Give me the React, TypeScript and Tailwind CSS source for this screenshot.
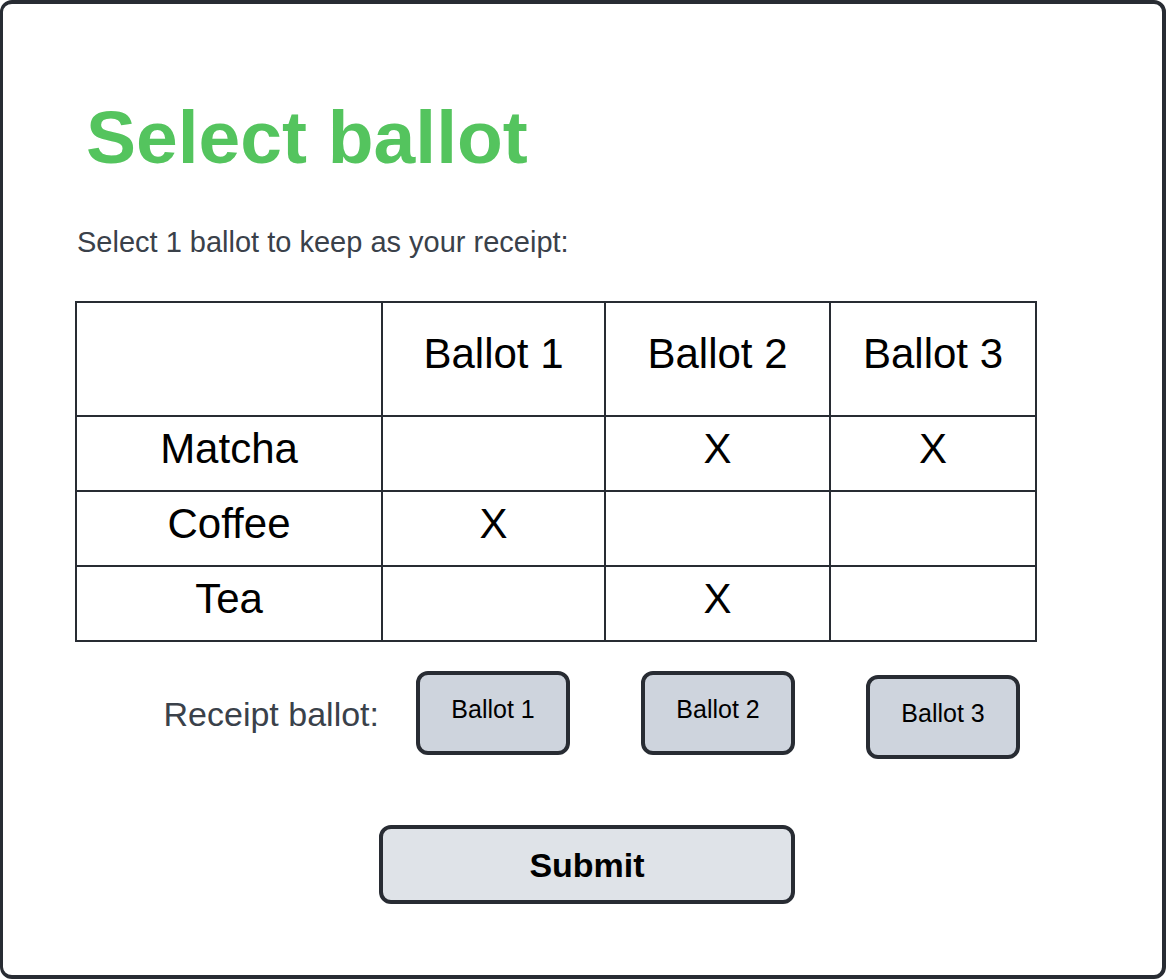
import React from "react";

const ballots = ["Ballot 1", "Ballot 2", "Ballot 3"];

const rows = [
  { name: "Matcha", marks: [false, true, true] },
  { name: "Coffee", marks: [true, false, false] },
  { name: "Tea", marks: [false, true, false] },
];

export default function App() {
  return (
    <main className="min-h-screen rounded-xl border-4 border-l-3 border-[#282c33] bg-white px-[72px] pt-[93px] pb-16 font-['Liberation_Sans',Arial,sans-serif] text-black">
      <h1 className="pl-[11px] text-[75px] leading-[80px] font-bold text-[#54c45e]">Select ballot</h1>
      <p className="mt-[47px] pl-[2px] text-[29px] leading-9 text-[#3a414a]">Select 1 ballot to keep as your receipt:</p>
      <table className="mt-[41px] w-[961px] max-w-full table-fixed border-collapse text-center text-[42px] leading-[50px]">
        <colgroup>
          <col className="w-[306px]" />
          <col className="w-[223px]" />
          <col className="w-[225px]" />
          <col className="w-[206px]" />
        </colgroup>
        <thead>
          <tr className="h-[114px]">
            <td className="border-2 border-[#282c33]" />
            {ballots.map((b) => (
              <th key={b} scope="col" className="border-2 border-[#282c33] pb-[10px] font-normal">{b}</th>
            ))}
          </tr>
        </thead>
        <tbody>
          {rows.map((row) => (
            <tr key={row.name} className="h-[75px]">
              <th scope="row" className="border-2 border-[#282c33] pb-[10px] font-normal">{row.name}</th>
              {row.marks.map((m, i) => (
                <td key={i} className="border-2 border-[#282c33] pb-[10px]">{m ? "X" : ""}</td>
              ))}
            </tr>
          ))}
        </tbody>
      </table>
      <div className="mt-[29px] flex items-start" role="group" aria-labelledby="receipt-label">
        <span id="receipt-label" className="w-[304px] pt-[23px] text-right text-[34px] leading-10 text-[#3a414a]">Receipt ballot:</span>
        <div className="ml-[37px] flex items-start gap-[71px]">
          {ballots.map((b) => (
            <button key={b} type="button" className="h-[84px] w-[154px] rounded-xl border-4 border-[#282c33] bg-[#ced4dd] pb-2 text-[25px] leading-8 last:mt-1">{b}</button>
          ))}
        </div>
      </div>
      <button type="submit" className="mt-[66px] ml-[304px] h-[79px] w-[416px] rounded-xl border-4 border-[#282c33] bg-[#dfe3e8] text-[34px] leading-10 font-bold">Submit</button>
    </main>
  );
}
